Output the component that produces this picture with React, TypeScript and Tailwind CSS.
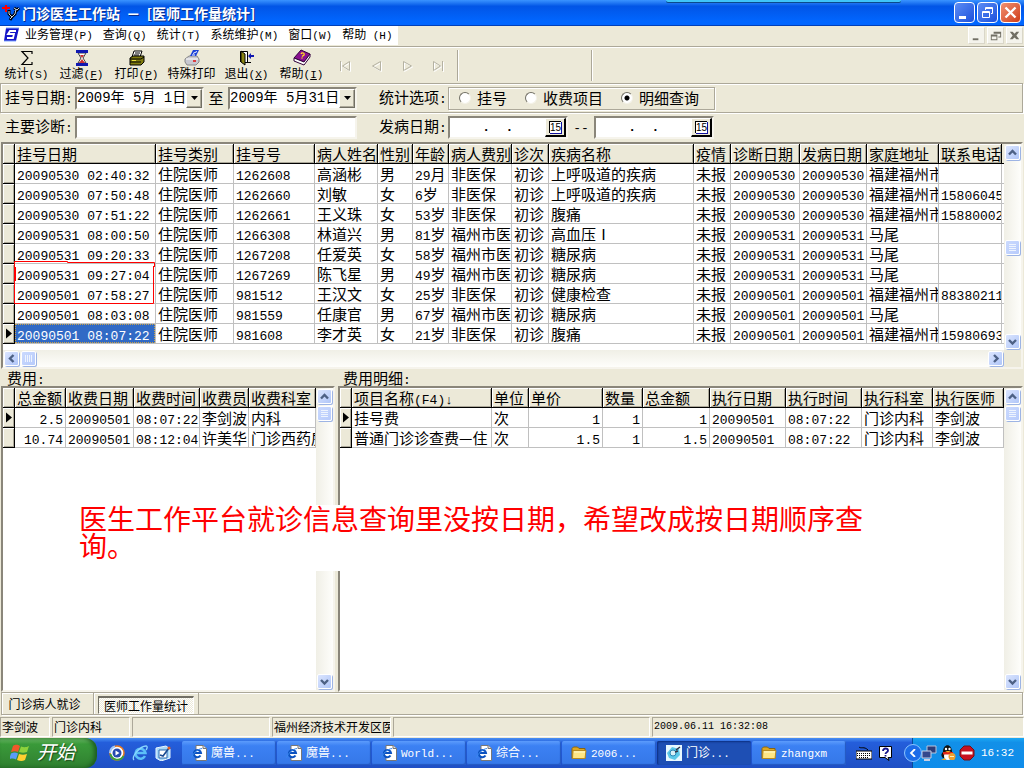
import { Fragment, useState } from 'react'
import type { ReactNode } from 'react'

const GROOVE = 'border border-[#aca899] shadow-[inset_1px_1px_0_#fff,1px_1px_0_#fff]'
const SUNKEN = 'border-2 border-t-[#8a867a] border-l-[#8a867a] border-r-[#f6f4ec] border-b-[#f6f4ec]'
const MONO = "font-['Liberation_Mono','Noto_Sans_CJK_SC',monospace]"

// Chinese at full size, latin and digits in a narrower half-width face
function Song({ text, small = false }: { text: string; small?: boolean }) {
  const parts = text.split(/([\x20-\x7e↓]+)/)
  return <>
    {parts.map((p, i) => i % 2 === 1
      ? <span key={i} className={`${MONO} whitespace-pre ${small ? 'text-[11px]' : 'text-[13px]'}`}>{p}</span>
      : <Fragment key={i}>{p}</Fragment>)}
  </>
}

/* ---------- scroll bars ---------- */

const ARROWS: Record<string, string> = {
  up: 'M4 9.5 L7.5 6 L11 9.5',
  down: 'M4 6 L7.5 9.5 L11 6',
  left: 'M9.5 4 L6 7.5 L9.5 11',
  right: 'M6 4 L9.5 7.5 L6 11',
}

function ScrollButton({ dir }: { dir: string }) {
  return <button aria-label={dir} className="w-[17px] h-[17px] shrink-0 p-px">
    <span className="flex w-[15px] h-[15px] rounded-xs border border-white bg-linear-to-br from-[#dbe5fe] to-[#b0c6f8] shadow-[1px_1px_0_#9db4e4]">
      <svg viewBox="1 1 13 13" className="w-[13px] h-[13px]">
        <path d={ARROWS[dir]} fill="none" stroke="#4d6185" strokeWidth="2.4" />
      </svg>
    </span>
  </button>
}

function Thumb({ horizontal = false }: { horizontal?: boolean }) {
  return <div className="w-[17px] h-[17px] shrink-0 p-px">
    <div className="w-[15px] h-[15px] rounded-xs border border-white bg-linear-to-br from-[#cbdafe] to-[#b7cbfb] shadow-[1px_1px_0_#9db4e4]">
      <svg viewBox="0 0 13 13" className="w-[13px] h-[13px]">
        <path d={horizontal ? 'M3.5 3v7M5.5 3v7M7.5 3v7M9.5 3v7' : 'M3 3.5h7M3 5.5h7M3 7.5h7M3 9.5h7'} stroke="#eef4fe" />
      </svg>
    </div>
  </div>
}

function VScroll({ offset = false }: { offset?: boolean }) {
  return <div className="w-[17px] shrink-0 flex flex-col justify-between bg-linear-to-r from-[#f0efe6] to-[#fefefb]">
    <div className="flex flex-col">
      <ScrollButton dir="up" />
      <div className={offset ? 'pt-[78px]' : ''}><Thumb /></div>
    </div>
    <ScrollButton dir="down" />
  </div>
}

/* ---------- data grid ---------- */

type GridProps = {
  label: string
  cols: string[]
  widths: number[]
  rows: string[][]
  current: number
  highlight?: boolean
  right?: number[]
  stub?: boolean
}

function Grid({ label, cols, widths, rows, current, highlight, right = [], stub }: GridProps) {
  return <table aria-label={label} className="w-full table-fixed border-separate border-spacing-0 text-[15px] leading-[19px] text-black">
    <colgroup>
      <col className="w-3" />
      {widths.map((w, i) => <col key={i} style={{ width: w }} />)}
      {stub && <col />}
    </colgroup>
    <thead>
      <tr>
        <th className="h-5 p-0 bg-[#ece9d8] border-r border-b border-black shadow-[inset_1px_1px_0_#fff,inset_-1px_-1px_0_#aca899]" />
        {cols.map(c => <th key={c} className="h-5 p-0 pl-0.5 text-left font-normal bg-[#ece9d8] border-r border-b border-black shadow-[inset_1px_1px_0_#fff,inset_-1px_-1px_0_#aca899]">
          <div className="h-[19px] overflow-hidden whitespace-nowrap"><Song text={c} /></div>
        </th>)}
        {stub && <th className="p-0 bg-[#ece9d8] border-b border-black" />}
      </tr>
    </thead>
    <tbody>
      {rows.map((r, i) => <tr key={i}>
        <td className="h-5 p-0 bg-[#ece9d8] border-r border-b border-black shadow-[inset_1px_1px_0_#fff,inset_-1px_-1px_0_#aca899]">
          {i === current && <svg viewBox="0 0 11 19" className="block w-[11px] h-[19px]"><path d="M3 4.5 L9 9.5 L3 14.5z" /></svg>}
        </td>
        {r.map((c, j) => <td key={j} className="h-5 p-0 border-r border-b border-[#c0c0c0]">
          <div className={`h-[19px] px-0.5 overflow-hidden whitespace-nowrap ${right.includes(j) ? 'text-right' : ''} ${highlight && i === current && j === 0 ? 'bg-[#316ac5] text-white outline-1 outline-dotted -outline-offset-1 outline-[#c9a24a]' : ''}`}>
            <Song text={c} />
          </div>
        </td>)}
        {stub && <td className="p-0 border-b border-[#c0c0c0]" />}
      </tr>)}
    </tbody>
  </table>
}

const VISIT_COLS = ['挂号日期', '挂号类别', '挂号号', '病人姓名', '性别', '年龄', '病人费别', '诊次', '疾病名称', '疫情', '诊断日期', '发病日期', '家庭地址', '联系电话']
const VISIT_WIDTHS = [141, 78, 81, 63, 35, 36, 63, 37, 145, 37, 69, 67, 72, 63]
const VISITS = [
  ['20090530 02:40:32', '住院医师', '1262608', '高涵彬', '男', '29月', '非医保', '初诊', '上呼吸道的疾病', '未报', '20090530', '20090530', '福建福州市', ''],
  ['20090530 07:50:48', '住院医师', '1262660', '刘敏', '女', '6岁', '非医保', '初诊', '上呼吸道的疾病', '未报', '20090530', '20090530', '福建福州市', '15806045'],
  ['20090530 07:51:22', '住院医师', '1262661', '王义珠', '女', '53岁', '非医保', '初诊', '腹痛', '未报', '20090530', '20090530', '福建福州市', '15880002'],
  ['20090531 08:00:50', '住院医师', '1266308', '林道兴', '男', '81岁', '福州市医', '初诊', '高血压Ⅰ', '未报', '20090531', '20090531', '马尾', ''],
  ['20090531 09:20:33', '住院医师', '1267208', '任爱英', '女', '58岁', '福州市医', '初诊', '糖尿病', '未报', '20090531', '20090531', '马尾', ''],
  ['20090531 09:27:04', '住院医师', '1267269', '陈飞星', '男', '49岁', '福州市医', '初诊', '糖尿病', '未报', '20090531', '20090531', '马尾', ''],
  ['20090501 07:58:27', '住院医师', '981512', '王汉文', '女', '25岁', '非医保', '初诊', '健康检查', '未报', '20090501', '20090501', '福建福州市', '88380211'],
  ['20090501 08:03:08', '住院医师', '981559', '任康官', '男', '67岁', '福州市医', '初诊', '糖尿病', '未报', '20090501', '20090501', '马尾', ''],
  ['20090501 08:07:22', '住院医师', '981608', '李才英', '女', '21岁', '非医保', '初诊', '腹痛', '未报', '20090501', '20090501', '福建福州市', '15980693'],
]

const FEE_COLS = ['总金额', '收费日期', '收费时间', '收费员', '收费科室']
const FEES = [
  ['2.5', '20090501', '08:07:22', '李剑波', '内科'],
  ['10.74', '20090501', '08:12:04', '许美华', '门诊西药房'],
]

const DETAIL_COLS = ['项目名称(F4)↓', '单位', '单价', '数量', '总金额', '执行日期', '执行时间', '执行科室', '执行医师']
const DETAILS = [
  ['挂号费', '次', '1', '1', '1', '20090501', '08:07:22', '门诊内科', '李剑波'],
  ['普通门诊诊查费—住', '次', '1.5', '1', '1.5', '20090501', '08:07:22', '门诊内科', '李剑波'],
]

/* ---------- title and menu ---------- */

function TitleBar() {
  return <header className="relative h-[26px] flex items-center justify-between pl-[3px] pr-[3px] bg-linear-to-b from-[#3a93ff] from-0% via-[#0255e6] via-25% to-[#0166ff] to-85% border-b border-[#0140b8]">
    <div className="absolute left-[65%] top-0 w-[23%] h-0.5 rounded-b-sm bg-[#3fc4f8] shadow-[0_1px_0_#0b4a8c]" />
    <div className="flex items-center gap-[3px] text-white">
      <svg viewBox="0 0 16 16" className="w-4 h-4 overflow-visible">
        <path d="M6 5v4l3 3 3-3 1-5M9 12l-2 3M11 3l3 2 2-2" fill="none" stroke="#000" strokeWidth="3" />
        <path d="M6 6v3l3 3 3-3 1-5M9 12l-2 2M11 3l3 2 2-2" fill="none" stroke="#c8d4e4" strokeWidth="1" />
        <path d="M2 0h2v2h3v2H4v3H2V4H-1V2h3z" fill="#f00" />
      </svg>
      <h1 className="text-[14px] leading-5 font-bold whitespace-pre [text-shadow:1px_1px_0_#0a2d8a]">门诊医生工作站  －  [医师工作量统计]</h1>
    </div>
    <div className="flex gap-[2px]">
      <button aria-label="最小化" className="w-[21px] h-[21px] rounded-sm border border-white bg-linear-to-br from-[#5c8cf4] to-[#1d4fdc]">
        <svg viewBox="0 0 19 19"><path d="M4 13h7v3H4z" fill="#fff" /></svg>
      </button>
      <button aria-label="还原" className="w-[21px] h-[21px] rounded-sm border border-white bg-linear-to-br from-[#5c8cf4] to-[#1d4fdc]">
        <svg viewBox="0 0 19 19" fill="none" stroke="#fff"><path d="M4.500 8.500h7v6h-7zM4 9.500h8M7.500 7V4.500h7v6H13M7 5.500h8" /></svg>
      </button>
      <button aria-label="关闭" className="w-[21px] h-[21px] rounded-sm border border-white bg-linear-to-br from-[#f09070] to-[#cf3a12]">
        <svg viewBox="0 0 19 19"><path d="M4.500 4.500l10 10M14.500 4.500l-10 10" stroke="#fff" strokeWidth="2.400" /></svg>
      </button>
    </div>
  </header>
}

const MENUS = ['业务管理(P)', '查询(Q)', '统计(T)', '系统维护(M)', '窗口(W)', '帮助 (H)']

function MenuBar() {
  return <div className="flex justify-between h-[22px] border-b border-white shadow-[inset_0_-1px_0_#aca899] pb-0.5">
    <nav className="flex items-start bg-white">
      <svg viewBox="0 0 17 16" className="w-[17px] h-4 mt-px ml-[3px]">
        <path d="M3 1h13l-3 13H1z" fill="#1414c8" />
        <path d="M13 4H7L5 7h6l-1 4H4" fill="none" stroke="#fff" strokeWidth="1.800" />
        <path d="M3 1h13M1 14h12" stroke="#7fa8ff" />
      </svg>
      {MENUS.map(m => <button key={m} className="px-[5px] leading-4 whitespace-nowrap"><Song text={m} small /></button>)}
    </nav>
    <div className="flex gap-0.5 pt-px pr-px">
      {['M4 11h6v2H4z', 'M3 7h7v6H3zM4 9v3h5V9zM6 4h8v6h-3V9h2V6H6z', 'M3 4h3l2 2 2-2h3l-3 4 3 4h-3l-2-2-2 2H3l3-4z'].map((d, i) => <button key={i} aria-label={['最小化窗口', '还原窗口', '关闭窗口'][i]} className="w-[17px] h-[17px] bg-[#f4f3ec] border border-white border-r-[#d9d6c8] border-b-[#d9d6c8]">
        <svg viewBox="0 0 16 16" className="w-[15px] h-[15px]"><path d={d} fill="#716f64" fillRule="evenodd" /></svg>
      </button>)}
    </div>
  </div>
}

/* ---------- tool bar ---------- */

const TOOLS: { name: string; hot?: string; line?: boolean; icon: ReactNode }[] = [
  { name: '统计', hot: 'S', icon: <path d="M13 4V1.500H3l6 6.500-6 6.500h10V12" fill="none" stroke="#000" strokeWidth="1.200" /> },
  {
    name: '过滤', hot: 'F', line: true, icon: <>
      <path d="M4 3h8l-3 5 3 5H4l3-5z" fill="#fff" stroke="#444" />
      <path d="M6 5h4l-2 3zM8 9l3 4H5z" fill="#d03030" />
      <path d="M2 0h12v3H2zM2 13h12v3H2z" fill="#1018b0" />
    </>
  },
  {
    name: '打印', hot: 'P', line: true, icon: <>
      <path d="M5 1h8l-2 6H3z" fill="#fff" stroke="#000" />
      <path d="M6 3h5M5 5h5" stroke="#000" />
      <path d="M1 8l3-2h11v6l-3 3H1z" fill="#807c10" stroke="#000" />
      <path d="M1 9h11l3-2M1 12h11" stroke="#000" fill="none" />
      <path d="M3 10.500h4" stroke="#e8e040" />
    </>
  },
  {
    name: '特殊打印', icon: <>
      <path d="M1 9l4-3h8l2 3v3l-3 3H3l-2-3z" fill="#c8c8d0" stroke="#888" />
      <path d="M6 6l3-6h6l-3 6z" fill="#1840d8" />
      <path d="M9 3.500l4-2M8 5h3" stroke="#fff" />
      <path d="M2 9h12" stroke="#fff" />
      <path d="M9 11h3" stroke="#e01010" strokeWidth="1.500" />
    </>
  },
  {
    name: '退出', hot: 'X', line: true, icon: <>
      <path d="M1.500 12V1.500h7V12" fill="#fff" stroke="#000" />
      <path d="M2 1l4 3v11l-4-3z" fill="#8a8410" stroke="#000" />
      <path d="M6 12.500h6" stroke="#000" />
      <path d="M9 6l3-3v2h3v2h-3v2z" fill="#1018b0" />
    </>
  },
  {
    name: '帮助', hot: 'I', line: true, icon: <>
      <path d="M7 0l9 4-6 8-10-4z" fill="#8a1090" stroke="#30003a" />
      <path d="M0 8l10 4 6-8v3l-6 8-10-4z" fill="#fff" stroke="#30003a" />
      <path d="M7 4c1-2 4-1 3 1L8 6.500M7.500 8h1" fill="none" stroke="#ffe020" strokeWidth="1.300" />
    </>
  },
]

const NAV = ['M3.500 3v10M12.500 3.500v9l-7-4.500z', 'M12.500 3.500v9l-8-4.500z', 'M4.500 3.500v9l8-4.500z', 'M12.500 3v10M3.500 3.500v9l7-4.500z']

function ToolBar() {
  return <div className="flex items-center h-[35px]">
    {TOOLS.map(t => <button key={t.name} className="w-[55px] h-full flex flex-col items-center pt-0.5 pr-0.5 leading-[14px] whitespace-nowrap">
      <svg viewBox="0 0 16 16" className="w-4 h-4 shrink-0 overflow-visible">{t.icon}</svg>
      <span>{t.name}{t.hot && <span className={`${MONO} text-[11px]`}>({t.line ? <u>{t.hot}</u> : t.hot})</span>}</span>
    </button>)}
    <div className="flex gap-[15px] pl-[7px] pr-[11px]">
      {NAV.map((d, i) => <button key={i} disabled aria-label={['首条', '上一条', '下一条', '末条'][i]} className="w-4 h-4">
        <svg viewBox="0 0 16 16" className="w-4 h-4" fill="none">
          <path d={d} stroke="#fff" transform="translate(1 1)" />
          <path d={d} stroke="#b5b2a2" />
        </svg>
      </button>)}
    </div>
    <div className="w-[134px] h-[31px] border-l border-[#aca899] shadow-[inset_1px_0_0_#fff]" />
    <div className="w-[134px] h-[31px] border-l border-[#aca899] shadow-[inset_1px_0_0_#fff]" />
  </div>
}

/* ---------- filters ---------- */

function DateCombo({ id, value }: { id: string; value: string }) {
  return <div className={`flex w-[129px] h-[23px] bg-white ${SUNKEN}`}>
    <input id={id} defaultValue={value} className={`${MONO} flex-1 min-w-0 text-[14px] outline-none`} />
    <button aria-label="选择日期" className="w-4 bg-[#ece9d8] border border-white border-r-[#716f64] border-b-[#716f64] shadow-[inset_-1px_-1px_0_#aca899] flex items-center justify-center">
      <svg viewBox="0 0 7 4" className="w-[7px] h-1"><path d="M0 0h7L3.500 4z" /></svg>
    </button>
  </div>
}

function DayBox({ id, label }: { id: string; label?: string }) {
  return <div className={`flex w-[120px] h-[23px] bg-white ${SUNKEN}`}>
    <input id={id} aria-label={label} defaultValue="    .  ." className={`${MONO} flex-1 min-w-0 px-px text-[13px] font-bold outline-none`} />
    <button aria-label="日历" className="w-[21px] bg-[#ece9d8] border border-white border-r-2 border-r-black border-b-2 border-b-black flex items-center justify-center">
      <span className="w-3 h-[12px] bg-white border-t border-l border-black shadow-[1px_1px_0_#1010a0] text-[10px] leading-[11px] font-['Liberation_Sans',sans-serif]">15</span>
    </button>
  </div>
}

function Filters() {
  const [mode, setMode] = useState('明细查询')
  return <div className="text-[15px] leading-5">
    <div className={`flex items-center h-[30px] pl-1 mr-px whitespace-nowrap ${GROOVE}`}>
      <label htmlFor="from" className="w-[70px]"><Song text="挂号日期:" /></label>
      <DateCombo id="from" value="2009年 5月 1日" />
      <label htmlFor="to" className="w-6 text-center">至</label>
      <DateCombo id="to" value="2009年 5月31日" />
      <span className="w-[91px] pl-[22px]"><Song text="统计选项:" /></span>
      <fieldset aria-label="统计选项" className={`flex items-center gap-[18px] w-[267px] h-[23px] pl-[10px] ${GROOVE}`}>
        {['挂号', '收费项目', '明细查询'].map(o => <label key={o} className="flex items-center gap-1.5">
          <input type="radio" name="mode" checked={mode === o} onChange={() => setMode(o)} className="appearance-none w-3 h-3 shrink-0 rounded-full bg-white border border-t-[#716f64] border-l-[#716f64] border-r-[#f4f2e8] border-b-[#f4f2e8] checked:bg-[radial-gradient(#000_2px,#fff_3px)]" />
          {o}
        </label>)}
      </fieldset>
    </div>
    <div className="flex items-center h-[29px] pl-[5px] whitespace-nowrap">
      <label htmlFor="diag" className="w-[70px]"><Song text="主要诊断:" /></label>
      <input id="diag" className={`w-[282px] h-[23px] bg-white px-1 outline-none ${SUNKEN}`} />
      <label htmlFor="ill" className="w-[91px] pl-[22px]"><Song text="发病日期:" /></label>
      <DayBox id="ill" />
      <span className="w-[26px] text-center"><Song text="--" /></span>
      <DayBox id="illto" label="发病日期止" />
    </div>
  </div>
}

/* ---------- bottom bars ---------- */

function Tabs() {
  return <div className={`flex h-[23px] mx-px ${GROOVE}`}>
    <button className="w-[92px] text-center leading-4 border-r border-[#aca899] pr-1.5">门诊病人就诊</button>
    <div className="px-1 pt-[3px] border-r border-[#aca899] shadow-[inset_1px_0_0_#fff]">
      <button className="w-24 h-[18px] leading-[14px] border border-t-2 border-[#716f64] border-r-white border-b-white bg-[repeating-conic-gradient(#fff_0_25%,#ece9d8_0_50%)] bg-size-[2px_2px]">医师工作量统计</button>
    </div>
  </div>
}

function StatusBar() {
  const cell = 'h-5 pl-px overflow-hidden whitespace-nowrap leading-[18px] border border-[#aca899] border-r-white border-b-white'
  return <footer className="flex gap-[2px] h-[23px] pt-[2px]">
    <div className={`w-[50px] ${cell}`}>李剑波</div>
    <div className={`w-[78px] ${cell}`}>门诊内科</div>
    <div className={`w-[138px] ${cell}`} />
    <div className={`w-[119px] ${cell}`}>福州经济技术开发区医</div>
    <div className={`w-[257px] ${cell}`} />
    <div className={`flex-1 ${MONO} text-[10px] ${cell}`}>2009.06.11 16:32:08</div>
  </footer>
}

function IePage() {
  return <svg viewBox="0 0 16 16" className="w-4 h-4 shrink-0">
    <path d="M5 .5h7l3.500 3V15.500H5z" fill="#fff" stroke="#777" />
    <path d="M12 .5v3h3.500" fill="#ddd" stroke="#777" />
    <path d="M9.500 10.500a3.600 3.600 0 1 1 .5-2.500H3.500" fill="#fff" stroke="#0c52c0" strokeWidth="2" />
    <path d="M.5 12.500C2 9 6 4 11 3.500" fill="none" stroke="#3a8af0" />
  </svg>
}

function Folder() {
  return <svg viewBox="0 0 16 16" className="w-4 h-4 shrink-0">
    <path d="M1 13.500V3.500l1.500-1.500h4L8 3.500h6v10z" fill="#e0a820" stroke="#8a6410" />
    <path d="M2 5.500h13l-1 8H1.500z" fill="#ffe684" stroke="#b88a20" />
    <path d="M3 7h11" stroke="#fffbd0" />
  </svg>
}

function Clinic() {
  return <svg viewBox="0 0 16 16" className="w-4 h-4 shrink-0">
    <path d="M0 0h16v16H0z" fill="#e8f8ff" />
    <path d="M1 8l5-6 7 2 1 6-5 5-6-2z" fill="#5cc8e8" />
    <circle cx="7" cy="8" r="3" fill="#d8f0f8" stroke="#2a88b8" />
    <path d="M10 5l4-3M9 7l3-1" stroke="#334" strokeWidth="1.500" />
  </svg>
}

const TASKS = [
  { t: '魔兽...', icon: <IePage /> },
  { t: '魔兽...', icon: <IePage /> },
  { t: 'World...', icon: <IePage /> },
  { t: '综合...', icon: <IePage /> },
  { t: '2006...', icon: <Folder /> },
  { t: '门诊...', icon: <Clinic />, active: true },
  { t: 'zhangxm', icon: <Folder /> },
]

function TaskBar() {
  return <div className="flex items-center h-[30px] text-white bg-linear-to-b from-[#4a90f4] from-0% via-[#245edb] via-15% to-[#1f4fc4] to-100%">
    <button className="w-[97px] h-full shrink-0 flex items-center gap-[7px] pl-[10px] rounded-r-xl bg-linear-to-b from-[#6fbd6a] via-[#3a9a3a] via-20% to-[#2f7f2f] shadow-[inset_-3px_0_4px_#1d5c20]">
      <svg viewBox="0 0 20 18" className="w-5 h-[18px]">
        <path d="M3 2c3-2 5-1 7 0L8 8C6 7 4 7 1 8z" fill="#f0582a" />
        <path d="M11 2.500c3 1 5 1 8-.5l-2 6c-3 1-5 1-8 0z" fill="#8cd23c" />
        <path d="M1 9.500c3-1.500 5-1 7 0l-2 6c-2-1-4-1.500-7 0z" fill="#5a9cf8" />
        <path d="M9 10c3 1 5 1 8 0l-2 6c-3 1.500-5 1-8 0z" fill="#ffd030" />
      </svg>
      <span className="text-[19px] leading-5 pb-1 italic [text-shadow:1px_1px_1px_#1d4a1d]">开始</span>
    </button>
    <div className="flex gap-[7px] pl-3 w-[85px] shrink-0 pr-4">
      <button aria-label="媒体播放器"><svg viewBox="0 0 16 16" className="w-4 h-4">
        <circle cx="8" cy="8" r="7" fill="#fff" stroke="#e87820" strokeWidth="1.500" />
        <path d="M1.500 9a7 7 0 0 0 13 2" fill="none" stroke="#38a040" strokeWidth="1.800" />
        <path d="M1 8a7 7 0 0 1 5-6.500" fill="none" stroke="#9cc8ff" strokeWidth="2" />
        <circle cx="8" cy="8" r="4.500" fill="#2448b0" />
        <path d="M6.500 5.500v5l4-2.500z" fill="#fff" />
      </svg></button>
      <button aria-label="浏览器"><svg viewBox="0 0 16 16" className="w-4 h-4" fill="none">
        <path d="M13 11a5 5 0 1 1 .5-3H4" stroke="#5cc0f8" strokeWidth="2.500" />
        <path d="M2 15C-1 12 8 1 14 1c2 0 1 3 0 4" stroke="#8cd8ff" strokeWidth="1.300" />
      </svg></button>
      <button aria-label="显示桌面"><svg viewBox="0 0 16 16" className="w-4 h-4">
        <path d="M1 3l10-2 4 3v9l-9 3-5-3z" fill="#a8d8f8" stroke="#e8f6ff" />
        <path d="M4 5h8v8H4z" fill="#fff" stroke="#2a6ab0" />
        <path d="M5 10l3 1 6-8" fill="none" stroke="#1a4a90" strokeWidth="1.600" />
        <circle cx="14" cy="3" r="1.500" fill="#e86020" />
      </svg></button>
    </div>
    <div className="flex flex-1 gap-px min-w-0">
      {TASKS.map((k, i) => <button key={i} className={`flex items-center gap-1 w-[94px] h-6 pl-[9px] rounded-xs whitespace-nowrap ${k.active ? 'bg-[#1e4fb4] shadow-[inset_1px_1px_2px_#0c2f80]' : 'bg-linear-to-b from-[#5c9cfc] via-[#3c81f3] via-20% to-[#3577e8] shadow-[inset_-1px_-1px_1px_#2458c0]'}`}>
        {k.icon}
        <span><Song text={k.t} small /></span>
      </button>)}
    </div>
    <div className="flex items-center gap-[7px] w-14">
      <svg viewBox="0 0 16 14" className="w-4 h-[14px]">
        <path d="M3 1c2 2 5-1 9 3" fill="none" stroke="#000" />
        <path d="M0 5h16v8H0z" fill="#fff" stroke="#000" />
        <path d="M1 7.500h14M1 9.500h14M3 11.500h10" stroke="#000" strokeDasharray="1 1" />
      </svg>
      <svg viewBox="0 0 14 15" className="w-[14px] h-[15px]">
        <path d="M.5 .5h12v11H9l1 3-4-3H.5z" fill="#fff" stroke="#000" />
        <path d="M4 5c0-3.500 5-3 5-.5 0 2-2.500 1.500-2.500 3.500M6.500 9v1.500" fill="none" stroke="#14148c" strokeWidth="1.800" />
      </svg>
    </div>
    <div className="relative flex items-center w-28 h-full pl-2 bg-linear-to-b from-[#1ba8f4] from-0% via-[#1290e8] via-15% to-[#0f8cea] border-l border-[#0a4a98]">
      <button aria-label="展开" className="absolute -left-[9px] w-[18px] h-[18px] rounded-full border border-[#8cc4ff] bg-[#1c6ce8] flex items-center justify-center">
        <svg viewBox="0 0 8 8" className="w-2 h-2"><path d="M6 0L2 4l4 4" fill="none" stroke="#fff" strokeWidth="1.800" /></svg>
      </button>
      <div className="flex gap-[3px]">
        <svg viewBox="0 0 16 16" className="w-4 h-4">
          <path d="M6 1h9v7H6z" fill="#2c3c78" stroke="#b8c4dc" />
          <path d="M1 6h9v7H1z" fill="#34488c" stroke="#c8d0e4" />
          <path d="M3 15h6" stroke="#c8d0e4" strokeWidth="2" />
        </svg>
        <svg viewBox="0 0 16 16" className="w-4 h-4">
          <path d="M3 13C0 10 2 8 3 7c0-9 9-9 9 0 1 1 3 4 1 6z" fill="#111" />
          <ellipse cx="8" cy="11" rx="4" ry="4" fill="#fff" />
          <path d="M3 7h10v2.500H3z" fill="#e02818" />
          <circle cx="6" cy="4" r="1.200" fill="#fff" /><circle cx="9.500" cy="4" r="1.200" fill="#fff" />
          <path d="M5 6h6l-3 1.500zM1 15h5l-1-2zM10 15h5l-3-2z" fill="#f8a820" />
          <circle cx="12" cy="11.500" r="3.500" fill="#f0a030" />
          <path d="M10 11.500h4" stroke="#fff0c0" />
        </svg>
        <svg viewBox="0 0 16 16" className="w-4 h-4">
          <path d="M5 1h6l4 4v6l-4 4H5l-4-4V5z" fill="#c81020" stroke="#701018" />
          <path d="M2.500 6.500h11v3h-11z" fill="#fff" />
        </svg>
      </div>
      <time className={`${MONO} pl-1.5 text-[11px]`}>16:32</time>
    </div>
  </div>
}

export default function App() {
  return <div className="min-h-screen flex flex-col bg-[#ece9d8] text-black text-[12px] font-['Noto_Sans_CJK_SC',sans-serif] overflow-hidden">
    <TitleBar />
    <MenuBar />
    <ToolBar />
    <Filters />

    <section className={`mx-px bg-white ${SUNKEN}`}>
      <div className="flex">
        <div className="relative flex-1 min-w-0 pb-1.5">
          <Grid label="挂号" cols={VISIT_COLS} widths={VISIT_WIDTHS} rows={VISITS} current={8} highlight stub />
          <svg viewBox="0 0 144 44" className="absolute left-[10px] top-[117px] w-36 h-11" fill="none" stroke="#f00">
            <path d="M1.500 6V.5h53v1h87V6M140.500 5v37.500H1.500V6M2.500 6v14" />
          </svg>
        </div>
        <VScroll offset />
      </div>
      <div className="flex bg-[#ece9d8] pr-[17px]">
        <div className="flex flex-1 justify-between bg-linear-to-b from-[#f0efe6] to-[#fefefb]">
          <div className="flex"><ScrollButton dir="left" /><Thumb horizontal /></div>
          <ScrollButton dir="right" />
        </div>
      </div>
    </section>

    <main className="relative flex-1 flex gap-[3px] mx-px">
      <section className="w-[334px] shrink-0 flex flex-col">
        <h2 className="h-[17px] pl-1.5 text-[15px] leading-[17px]"><Song text="费用:" /></h2>
        <div className={`flex-1 flex bg-white ${SUNKEN}`}>
          <div className="flex-1 min-w-0">
            <Grid label="费用" cols={FEE_COLS} widths={[51, 68, 66, 49, 67]} rows={FEES} current={0} right={[0]} />
          </div>
          <VScroll />
        </div>
      </section>
      <section className="flex-1 min-w-0 flex flex-col">
        <h2 className="h-[17px] pl-[5px] text-[15px] leading-[17px]"><Song text="费用明细:" /></h2>
        <div className={`flex-1 flex bg-white ${SUNKEN}`}>
          <div className="flex-1 min-w-0">
            <Grid label="费用明细" cols={DETAIL_COLS} widths={[140, 37, 74, 40, 67, 76, 76, 71, 71]} rows={DETAILS} current={0} right={[2, 3, 4]} />
          </div>
          <VScroll />
        </div>
      </section>
      <p className="absolute left-[78px] top-[136px] w-[790px] h-[66px] bg-white text-[#f00] text-[28px] leading-[27px]">
        医生工作平台就诊信息查询里没按日期，希望改成按日期顺序查询。
      </p>
    </main>

    <Tabs />
    <StatusBar />
    <TaskBar />
  </div>
}
